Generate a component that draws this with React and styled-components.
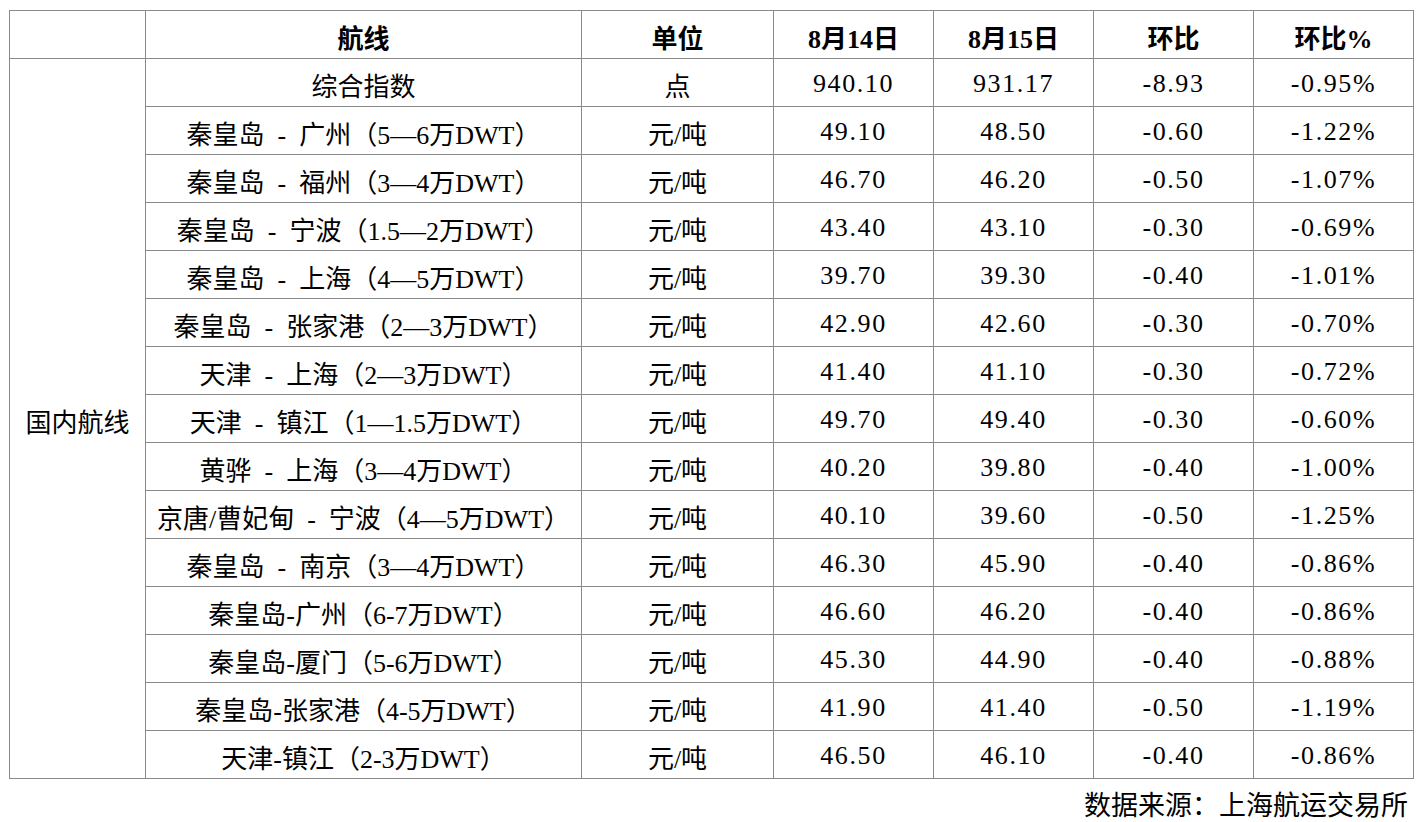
import React from 'react'
import styled, { createGlobalStyle } from 'styled-components'

const GlobalStyle = createGlobalStyle`
  html, body {
    margin: 0;
    padding: 0;
    background: #ffffff;
  }
  body {
    font-family: "Liberation Serif", "Noto Sans CJK SC", serif;
    color: #000;
  }
`

const Page = styled.div`
  padding: 10px 0 0 9px;
  width: 1405px;
`

const Grid = styled.div`
  display: grid;
  grid-template-columns: 136px 436px 192px 160px 160px 160px 160px;
  grid-auto-rows: 48px;
  border-top: 1px solid #8a8a8a;
  border-left: 1px solid #8a8a8a;
`

const Cell = styled.div`
  display: flex;
  align-items: center;
  justify-content: center;
  border-right: 1px solid #8a8a8a;
  border-bottom: 1px solid #8a8a8a;
  font-size: 26px;
  font-weight: ${p => (p.$head ? 700 : 400)};
  letter-spacing: ${p => (p.$num ? '1.6px' : '0')};
  white-space: pre;
  grid-row: ${p => (p.$span ? `span ${p.$span}` : 'auto')};
  padding-top: 3px;
  box-sizing: border-box;
`

const Source = styled.div`
  text-align: right;
  font-size: 27px;
  line-height: 32px;
  margin-top: 11px;
  padding-right: 6px;
`

const headers = ['', '航线', '单位', '8月14日', '8月15日', '环比', '环比%']

const sp = '\u2002-\u2002'

const rows = [
  ['综合指数', '点', '940.10', '931.17', '-8.93', '-0.95%'],
  [`秦皇岛${sp}广州（5—6万DWT）`, '元/吨', '49.10', '48.50', '-0.60', '-1.22%'],
  [`秦皇岛${sp}福州（3—4万DWT）`, '元/吨', '46.70', '46.20', '-0.50', '-1.07%'],
  [`秦皇岛${sp}宁波（1.5—2万DWT）`, '元/吨', '43.40', '43.10', '-0.30', '-0.69%'],
  [`秦皇岛${sp}上海（4—5万DWT）`, '元/吨', '39.70', '39.30', '-0.40', '-1.01%'],
  [`秦皇岛${sp}张家港（2—3万DWT）`, '元/吨', '42.90', '42.60', '-0.30', '-0.70%'],
  [`天津${sp}上海（2—3万DWT）`, '元/吨', '41.40', '41.10', '-0.30', '-0.72%'],
  [`天津${sp}镇江（1—1.5万DWT）`, '元/吨', '49.70', '49.40', '-0.30', '-0.60%'],
  [`黄骅${sp}上海（3—4万DWT）`, '元/吨', '40.20', '39.80', '-0.40', '-1.00%'],
  [`京唐/曹妃甸${sp}宁波（4—5万DWT）`, '元/吨', '40.10', '39.60', '-0.50', '-1.25%'],
  [`秦皇岛${sp}南京（3—4万DWT）`, '元/吨', '46.30', '45.90', '-0.40', '-0.86%'],
  ['秦皇岛-广州（6-7万DWT）', '元/吨', '46.60', '46.20', '-0.40', '-0.86%'],
  ['秦皇岛-厦门（5-6万DWT）', '元/吨', '45.30', '44.90', '-0.40', '-0.88%'],
  ['秦皇岛-张家港（4-5万DWT）', '元/吨', '41.90', '41.40', '-0.50', '-1.19%'],
  ['天津-镇江（2-3万DWT）', '元/吨', '46.50', '46.10', '-0.40', '-0.86%'],
]

const App = () => {
  return (
    <>
      <GlobalStyle />
      <Page>
        <Grid>
          {headers.map((h, i) => (
            <Cell key={'h' + i} $head>{h}</Cell>
          ))}
          <Cell $span={rows.length}>国内航线</Cell>
          {rows.map((r, ri) =>
            r.map((c, ci) => (
              <Cell key={ri + '-' + ci} $num={ci >= 2}>{c}</Cell>
            ))
          )}
        </Grid>
        <Source>数据来源：上海航运交易所</Source>
      </Page>
    </>
  )
}

export default App
